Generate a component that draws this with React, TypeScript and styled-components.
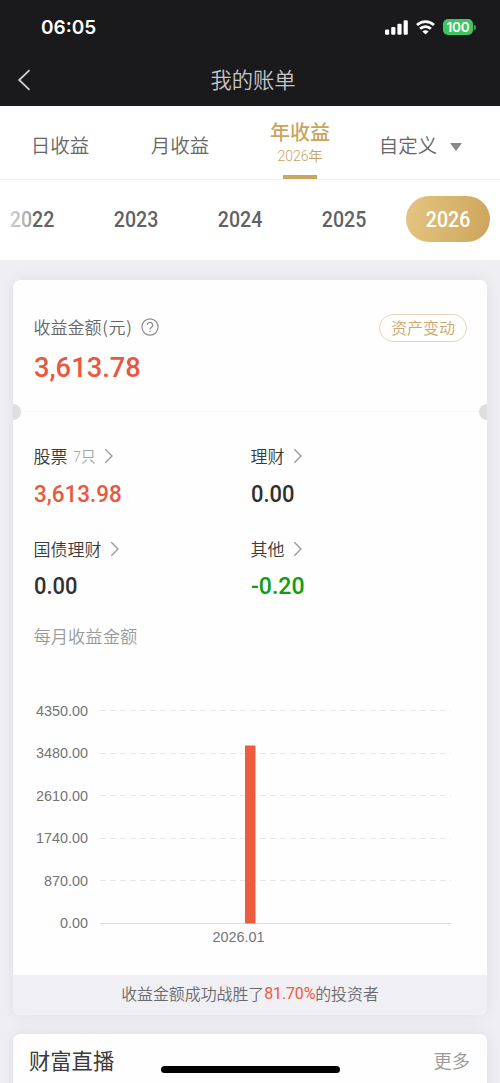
import React from "react";
import styled, { createGlobalStyle } from "styled-components";

const Global = createGlobalStyle`
  * { box-sizing: border-box; }
  html, body { margin: 0; padding: 0; background: #efeff3; }
  body { font-family: "Noto Sans CJK SC", sans-serif; overflow: hidden; }
`;

const Screen = styled.div`
  position: relative;
  width: 500px;
  height: 1083px;
  overflow: hidden;
  background: #efeff3;
`;

const Header = styled.header`
  height: 106px;
  background: #1a1a1c;
  color: #fff;
`;

const StatusBar = styled.div`
  display: flex;
  align-items: center;
  justify-content: space-between;
  height: 54px;
  padding: 0 25px 0 41px;
`;

const Clock = styled.span`
  margin-top: 1px;
  font: 600 19px/24px Inter, sans-serif;
`;

const StatusIcons = styled.div`
  display: flex;
  align-items: center;
  gap: 8px;
  svg { display: block; }
`;

const Battery = styled.div`
  display: flex;
  align-items: center;
`;

const BatteryBody = styled.div`
  width: 30px;
  height: 16px;
  border-radius: 5px;
  background: #3fc463;
  font: 600 13.5px/16px Inter, sans-serif;
  letter-spacing: -0.2px;
  text-align: center;
`;

const BatteryTip = styled.div`
  width: 2px;
  height: 5px;
  margin: 0 -1px 0 1px;
  border-radius: 0 2px 2px 0;
  background: #34a853;
`;

const NavBar = styled.div`
  display: grid;
  grid-template-columns: 60px 1fr 54px;
  align-items: center;
  height: 52px;
  svg { margin-left: 17px; }
`;

const Title = styled.h1`
  margin: -2px 0 0;
  font-size: 21.3px;
  font-weight: 350;
  line-height: 30px;
  text-align: center;
  color: #c6c6c8;
`;

const Tabs = styled.nav`
  display: grid;
  grid-template-columns: repeat(4, 120px);
  height: 74px;
  background: #fff;
  border-bottom: 1px solid #f0f0f0;
`;

const Tab = styled.div<{ $active?: boolean }>`
  display: flex;
  flex-direction: ${(p) => (p.$active ? "column" : "row")};
  align-items: center;
  justify-content: ${(p) => (p.$active ? "flex-start" : "center")};
  padding: ${(p) => (p.$active ? "12px 0 0" : "5px 0 0")};
  font-size: ${(p) => (p.$active ? 20 : 19.5)}px;
  font-weight: ${(p) => (p.$active ? 500 : 350)};
  line-height: 28px;
  color: ${(p) => (p.$active ? "#c9a45c" : "#666")};
`;

const TabSub = styled.span`
  height: 20px;
  margin-top: 1px;
  font: 350 14px/18px Roboto, "Noto Sans CJK SC", sans-serif;
`;

const TabLine = styled.span`
  width: 34px;
  height: 4px;
  margin-top: 8px;
  flex: none;
  background: #c9a763;
`;

const Caret = styled.svg`
  margin: 4px -1px 0 13px;
`;

const Years = styled.div`
  position: relative;
  display: flex;
  align-items: center;
  gap: 20px;
  height: 80px;
  padding-bottom: 2px;
  background: #fff;
`;

const Year = styled.div<{ $active?: boolean }>`
  display: flex;
  align-items: center;
  justify-content: center;
  flex: none;
  width: 84px;
  height: 46px;
  padding-top: 2px;
  border-radius: 23px;
  color: ${(p) => (p.$active ? "#fff" : "#626264")};
  background: ${(p) => (p.$active ? "linear-gradient(100deg, #e4c581, #cda55c)" : "none")};
  &:first-child { margin-left: -10px; }
`;

const Fade = styled.div`
  position: absolute;
  left: 0;
  top: 0;
  width: 32px;
  height: 78px;
  background: linear-gradient(90deg, rgba(255, 255, 255, 0.85), rgba(255, 255, 255, 0.4));
`;

/* Narrow figures: the glyphs are condensed horizontally by $narrow. */
const Figure = styled.span<{ $size: number; $narrow: number; $color?: string; $center?: boolean }>`
  display: block;
  width: max-content;
  margin-left: ${(p) => (p.$center ? 0 : "0.3px")};
  font: 550 ${(p) => p.$size}px/32px Roboto, sans-serif;
  color: ${(p) => p.$color ?? "inherit"};
  transform: scaleX(${(p) => p.$narrow});
  transform-origin: ${(p) => (p.$center ? "center" : "left")};
`;

const Card = styled.section<{ $top: number; $height: number }>`
  display: flex;
  flex-direction: column;
  height: ${(p) => p.$height}px;
  margin: ${(p) => p.$top}px 13px 0;
  border-radius: 7px;
  background: #fefefe;
  box-shadow: 0 0 14px rgba(70, 70, 90, 0.1);
  overflow: hidden;
`;

const Summary = styled.div`
  display: flex;
  justify-content: space-between;
  height: 132px;
  padding: 34.5px 20px 0 20.5px;
`;

const SummaryLabel = styled.div`
  display: flex;
  align-items: center;
  height: 25px;
  margin-bottom: 13px;
  font-size: 17px;
  font-weight: 350;
  line-height: 25px;
  color: #666;
  svg { margin: 1px 0 0 8px; }
`;

const Paren = styled.span`
  width: 7px;
  text-align: center;
`;

const Pill = styled.div`
  width: 88px;
  height: 28px;
  border: 1px solid #e6d5bb;
  border-radius: 14px;
  font-size: 16px;
  font-weight: 350;
  line-height: 25px;
  text-align: center;
  color: #c8a86c;
`;

const Perforation = styled.div`
  display: flex;
  align-items: center;
  justify-content: space-between;
  height: 16px;
  margin: -8px -8px 0;
`;

const Notch = styled.i`
  width: 16px;
  height: 16px;
  border-radius: 50%;
  background: #dedee1;
`;

const PerforationLine = styled.i`
  flex: 1;
  border-top: 1px solid #f7f7f7;
`;

const Breakdown = styled.div`
  display: grid;
  grid-template-columns: 217px 1fr;
  grid-auto-rows: 92.5px;
  padding: 24px 0 0 20.5px;
`;

const ItemLabel = styled.div`
  display: flex;
  align-items: center;
  height: 25px;
  margin-bottom: 9px;
  line-height: 25px;
  font-size: 17px;
  color: #3a3a3a;
  font-weight: 350;
  svg { margin: 0 0 0 8.500px; }
`;

const ItemName = styled.span`
  margin-top: -1px;
`;

const Count = styled.span`
  margin: 3px -0.5px 0 5.500px;
  font: 350 14.5px/20px Roboto, "Noto Sans CJK SC", sans-serif;
  color: #a2a2a2;
`;

const ChartTitle = styled.div`
  height: 25px;
  margin: -6px 0 0 20.5px;
  font-size: 17.3px;
  font-weight: 350;
  line-height: 25px;
  color: #999;
`;

const Chart = styled.svg`
  display: block;
  flex: none;
  margin-top: 42px;
  font: 14.4px "Liberation Sans", sans-serif;
  fill: #747474;
`;

const Ranking = styled.div`
  display: flex;
  align-items: center;
  justify-content: center;
  height: 40.5px;
  margin-top: auto;
  padding-bottom: 2.500px;
  background: #efeff4;
  font-size: 15.9px;
  font-weight: 350;
  color: #6a6a6c;
`;

const Percent = styled.span`
  width: 51px;
  margin-top: 1px;
  white-space: nowrap;
  font: 400 16px/24px Roboto, sans-serif;
  letter-spacing: -0.15px;
  color: #ed5a40;
`;

const LiveHeader = styled.div`
  display: flex;
  align-items: center;
  justify-content: space-between;
  height: 51px;
  padding: 0 17px 0 16px;
`;

const LiveTitle = styled.h2`
  margin: 0;
  font-size: 21.3px;
  font-weight: 400;
  color: #3a3a3a;
`;

const More = styled.span`
  font-size: 18.3px;
  font-weight: 350;
  color: #999;
`;

const HomeIndicator = styled.div`
  position: absolute;
  left: 161px;
  top: 1066px;
  width: 179px;
  height: 7px;
  border-radius: 4px;
  background: #000;
`;

const Chevron = () => (
  <svg width="10" height="16" viewBox="0 0 10 16" fill="none" stroke="#9b9b9b" strokeWidth="1.4">
    <path d="M1.3 1.2 8 8l-6.7 6.8" />
  </svg>
);

const RED = "#ea563e";
const items = [
  { name: "股票", count: "7只", value: "3,613.98", color: RED, narrow: 0.935 },
  { name: "理财", value: "0.00", color: "#303030", narrow: 0.915 },
  { name: "国债理财", value: "0.00", color: "#303030", narrow: 0.915 },
  { name: "其他", value: "-0.20", color: "#0d9e12", narrow: 0.96 },
];
const years = ["2022", "2023", "2024", "2025", "2026"];
const ticks = ["4350.00", "3480.00", "2610.00", "1740.00", "870.00", "0.00"];

export default function App() {
  return (
    <Screen>
      <Global />
      <Header>
        <StatusBar>
          <Clock>06:05</Clock>
          <StatusIcons>
            <svg width="23" height="15" viewBox="0 0 23 15" fill="#fff">
              <rect x="0" y="9.5" width="4.2" height="5.2" rx="1.2" />
              <rect x="6.2" y="7" width="4.2" height="7.7" rx="1.2" />
              <rect x="12.4" y="3.8" width="4.2" height="10.9" rx="1.2" />
              <rect x="18.6" y="0.3" width="4.2" height="14.4" rx="1.2" />
            </svg>
            <svg width="19" height="15" viewBox="0 0 19 15" fill="none" stroke="#fff" strokeWidth="2.7">
              <path d="M1 5.1a12.3 12.3 0 0 1 17 0" />
              <path d="M4.1 8.8a7.8 7.8 0 0 1 10.8 0" />
              <path d="M9.5 14.5 6.4 11.5a4.4 4.4 0 0 1 6.2 0z" fill="#fff" stroke="none" />
            </svg>
            <Battery>
              <BatteryBody>100</BatteryBody>
              <BatteryTip />
            </Battery>
          </StatusIcons>
        </StatusBar>
        <NavBar>
          <svg width="14" height="22" viewBox="0 0 14 22" fill="none" stroke="#d0d0d2" strokeWidth="1.8">
            <path d="M12.5 1.2 2.2 11l10.3 9.8" />
          </svg>
          <Title>我的账单</Title>
        </NavBar>
      </Header>
      <Tabs>
        <Tab>日收益</Tab>
        <Tab>月收益</Tab>
        <Tab $active>
          年收益
          <TabSub>2026年</TabSub>
          <TabLine />
        </Tab>
        <Tab>
          自定义
          <Caret width="12" height="8" viewBox="0 0 12 8" fill="#888">
            <path d="M0 0h12L6 8z" />
          </Caret>
        </Tab>
      </Tabs>
      <Years>
        {years.map((y) => (
          <Year key={y} $active={y === "2026"}>
            <Figure $size={22} $narrow={0.89} $center>{y}</Figure>
          </Year>
        ))}
        <Fade />
      </Years>
      <Card $top={19.5} $height={735.5}>
        <Summary>
          <div>
            <SummaryLabel>
              收益金额<Paren>(</Paren>元<Paren>)</Paren>
              <svg width="18" height="18" viewBox="0 0 18 18" fill="none" stroke="#8c8c8c" strokeWidth="1.2">
                <circle cx="9" cy="9" r="8.1" />
                <path d="M6.3 7.1a2.7 2.7 0 1 1 4.3 2.1C9.6 9.9 9 10.3 9 11.4" />
                <path d="M9 12.7v1.3" />
              </svg>
            </SummaryLabel>
            <Figure $size={28} $narrow={0.975} $color={RED}>3,613.78</Figure>
          </div>
          <Pill>资产变动</Pill>
        </Summary>
        <Perforation>
          <Notch />
          <PerforationLine />
          <Notch />
        </Perforation>
        <Breakdown>
          {items.map((it) => (
            <div key={it.name}>
              <ItemLabel>
                <ItemName>{it.name}</ItemName>
                {it.count && <Count>{it.count}</Count>}
                <Chevron />
              </ItemLabel>
              <Figure $size={24} $narrow={it.narrow} $color={it.color}>{it.value}</Figure>
            </div>
          ))}
        </Breakdown>
        <ChartTitle>每月收益金额</ChartTitle>
        <Chart width="474" height="260" viewBox="0 0 474 260">
          {ticks.map((t, i) => {
            const y = 20.6 + i * 42.5;
            const base = i === ticks.length - 1;
            return (
              <g key={t}>
                <text x="75" y={y + 5} textAnchor="end">{t}</text>
                <line
                  x1="87" x2="438" y1={Math.floor(y) + 0.5} y2={Math.floor(y) + 0.5}
                  stroke={base ? "#dcdcdc" : "#e8e8e8"}
                  strokeDasharray={base ? undefined : "6 4"}
                />
              </g>
            );
          })}
          <rect x="232" y="55.5" width="10.5" height="178" fill="#ef5b3e" />
          <text x="225.5" y="251.5" textAnchor="middle">2026.01</text>
        </Chart>
        <Ranking>
          收益金额成功战胜了<Percent>81.70%</Percent>的投资者
        </Ranking>
      </Card>
      <Card $top={19} $height={80}>
        <LiveHeader>
          <LiveTitle>财富直播</LiveTitle>
          <More>更多</More>
        </LiveHeader>
      </Card>
      <HomeIndicator />
    </Screen>
  );
}
